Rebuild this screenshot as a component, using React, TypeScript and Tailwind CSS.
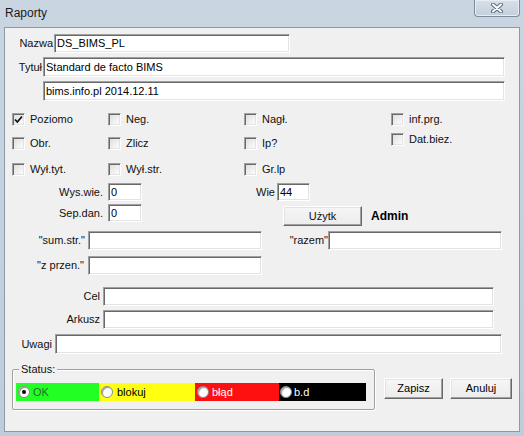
import React from 'react';

const sunken =
  'border border-t-[#a0a0a0] border-l-[#a0a0a0] border-r-white border-b-white shadow-[inset_1px_1px_0_#696969,inset_-1px_-1px_0_#e3e3e3]';
const raised =
  'border border-t-white border-l-white border-r-[#696969] border-b-[#696969] shadow-[inset_-1px_-1px_0_#a0a0a0,inset_1px_1px_0_#e3e3e3]';

function Field({ w, h, value = '' }: { w: string; h: string; value?: string }) {
  return (
    <div className={`${w} ${h} ${sunken} bg-white flex items-center pl-[2px] overflow-hidden whitespace-nowrap text-black`}>
      {value}
    </div>
  );
}

function Label({ w, h, text, pr = 'pr-[1px]' }: { w: string; h: string; text: string; pr?: string }) {
  return (
    <div className={`${w} ${h} shrink-0 flex items-center justify-end ${pr} whitespace-nowrap`}>{text}</div>
  );
}

function Check({ label, checked = false, className = '' }: { label: string; checked?: boolean; className?: string }) {
  return (
    <div className={`flex items-center gap-[5px] ${className}`}>
      <div className={`w-[13px] h-[13px] shrink-0 ${sunken} bg-gradient-to-br from-[#dcdcdc] to-white flex items-center justify-center`}>
        {checked && (
          <svg width="9" height="9" viewBox="0 0 9 9">
            <path d="M1 4.5 L3.3 7 L8 1.5" fill="none" stroke="#111" strokeWidth="1.8" />
          </svg>
        )}
      </div>
      <span className="whitespace-nowrap">{label}</span>
    </div>
  );
}

function Radio({ selected = false }: { selected?: boolean }) {
  return (
    <div className="w-[12px] h-[12px] shrink-0 rounded-full bg-white border border-[#8a8a8a] shadow-[inset_1px_1px_1px_#9a9a9a] flex items-center justify-center">
      {selected && <div className="w-[4px] h-[4px] rounded-full bg-black" />}
    </div>
  );
}

function Button({ w, text }: { w: string; text: string }) {
  return (
    <div className={`${w} h-[21px] shrink-0 ${raised} bg-gradient-to-b from-[#f6f6f6] to-[#ececec] flex items-center justify-center text-black`}>
      {text}
    </div>
  );
}

export default function App() {
  return (
    <div
      className="w-[524px] h-[436px] flex flex-col bg-gradient-to-b from-[#c9d5e1] to-[#bfcddb] text-[11px] text-[#111]"
      style={{ fontFamily: '"Liberation Sans", Arial, sans-serif' }}
    >
      {/* title bar */}
      <div className="h-[27px] shrink-0 flex items-start">
        <span className="ml-[5px] mt-[6px] text-[12px] leading-[14px] text-[#1a1a1a]">Raporty</span>
        <div className="ml-auto mr-[4px] w-[46px] h-[17px] rounded-b-[4px] border border-t-0 border-[#7d8b9a] bg-gradient-to-b from-[#d7e0ea] to-[#c3cfdc] shadow-[inset_0_0_0_1px_#e6edf4] flex items-center justify-center">
          <svg width="14" height="10" viewBox="0 0 14 10">
            <path d="M3 1.5 L11 8.5 M11 1.5 L3 8.5" stroke="#5d6978" strokeWidth="4" strokeLinecap="round" />
            <path d="M3 1.5 L11 8.5 M11 1.5 L3 8.5" stroke="#fff" strokeWidth="2" strokeLinecap="round" />
          </svg>
        </div>
      </div>

      {/* client area */}
      <div className="ml-[4px] w-[516px] h-[405px] border border-[#8b9aaa] bg-[#f0f0f0] flex flex-col">
        <div className="mt-[6px] flex">
          <Label w="w-[49px]" h="h-[19px]" text="Nazwa" />
          <Field w="w-[236px]" h="h-[19px]" value="DS_BIMS_PL" />
        </div>
        <div className="mt-[4px] flex">
          <Label w="w-[38px]" h="h-[20px]" text="Tytuł" />
          <Field w="w-[462px]" h="h-[20px]" value="Standard de facto BIMS" />
        </div>
        <div className="mt-[4px] ml-[38px] flex">
          <Field w="w-[462px]" h="h-[20px]" value="bims.info.pl 2014.12.11" />
        </div>

        {/* checkboxes */}
        <div className="mt-[12px] h-[13px] flex items-center pl-[7px]">
          <Check className="w-[96px]" label="Poziomo" checked />
          <Check className="w-[136px]" label="Neg." />
          <Check className="w-[147px]" label="Nagł." />
          <Check label="inf.prg." />
        </div>
        <div className="mt-[11px] h-[13px] flex items-center pl-[7px]">
          <Check className="w-[96px]" label="Obr." />
          <Check className="w-[136px]" label="Zlicz" />
          <Check className="w-[147px]" label="Ip?" />
          <Check className="-translate-y-[4px]" label="Dat.biez." />
        </div>
        <div className="mt-[13px] h-[13px] flex items-center pl-[7px]">
          <Check className="w-[96px]" label="Wył.tyt." />
          <Check className="w-[136px]" label="Wył.str." />
          <Check className="w-[147px]" label="Gr.lp" />
        </div>

        <div className="mt-[7px] flex">
          <Label w="w-[103px]" h="h-[18px]" pr="pr-[5px]" text="Wys.wie." />
          <Field w="w-[34px]" h="h-[18px]" value="0" />
          <Label w="w-[135px]" h="h-[18px]" pr="pr-[2px]" text="Wie" />
          <Field w="w-[33px]" h="h-[18px]" value="44" />
        </div>
        <div className="mt-[3px] flex items-start">
          <Label w="w-[103px]" h="h-[18px]" pr="pr-[5px]" text="Sep.dan." />
          <Field w="w-[34px]" h="h-[18px]" value="0" />
          <div className="ml-[141px] mt-[2px] w-[79px] h-[20px]">
            <div className={`w-[79px] h-[20px] ${raised} bg-gradient-to-b from-[#f6f6f6] to-[#ececec] flex items-center justify-center`}>
              Użytk
            </div>
          </div>
          <span className="ml-[9px] mt-[5px] font-bold text-[12px] leading-[14px] text-black">Admin</span>
        </div>

        <div className="mt-[5px] flex">
          <Label w="w-[83px]" h="h-[19px]" pr="pr-[3px]" text={'"sum.str."'} />
          <Field w="w-[174px]" h="h-[19px]" />
          <Label w="w-[66px]" h="h-[19px]" pr="pr-[0px]" text={'"razem"'} />
          <Field w="w-[174px]" h="h-[19px]" />
        </div>
        <div className="mt-[6px] flex">
          <Label w="w-[83px]" h="h-[19px]" pr="pr-[4px]" text={'"z przen."'} />
          <Field w="w-[174px]" h="h-[19px]" />
        </div>

        <div className="mt-[12px] flex">
          <Label w="w-[98px]" h="h-[19px]" pr="pr-[3px]" text="Cel" />
          <Field w="w-[391px]" h="h-[19px]" />
        </div>
        <div className="mt-[4px] flex">
          <Label w="w-[98px]" h="h-[19px]" pr="pr-[3px]" text="Arkusz" />
          <Field w="w-[391px]" h="h-[19px]" />
        </div>
        <div className="mt-[5px] flex">
          <Label w="w-[50px]" h="h-[20px]" pr="pr-[3px]" text="Uwagi" />
          <Field w="w-[447px]" h="h-[20px]" />
        </div>

        {/* status + buttons */}
        <div className="mt-[15px] flex items-start">
          <div className="relative ml-[7px] w-[363px] h-[41px] border border-[#a0a0a0] rounded-[2px] shadow-[inset_1px_1px_0_#fff,1px_1px_0_#fff] pt-[13px] pl-[3px]">
            <span className="absolute left-[6px] -top-[8px] px-[2px] bg-[#f0f0f0] leading-[14px]">Status:</span>
            <div className="flex h-[18px] w-[350px]">
              <div className="w-[83px] bg-[#22ff22] flex items-center gap-[3px] pl-[2px]">
                <Radio selected />
                <span className="text-[#2f6b2f]">OK</span>
              </div>
              <div className="w-[96px] bg-[#ffff11] flex items-center gap-[4px] pl-[2px]">
                <Radio />
                <span className="text-black">blokuj</span>
              </div>
              <div className="w-[84px] bg-[#ff1010] flex items-center gap-[3px] pl-[2px]">
                <Radio />
                <span className="text-white">błąd</span>
              </div>
              <div className="flex-1 bg-black flex items-center gap-[2px] pl-[1px]">
                <Radio />
                <span className="text-white">b.d</span>
              </div>
            </div>
          </div>
          <div className="ml-[9px] mt-[9px] flex gap-[7px]">
            <Button w="w-[59px]" text="Zapisz" />
            <Button w="w-[62px]" text="Anuluj" />
          </div>
        </div>
      </div>
    </div>
  );
}
